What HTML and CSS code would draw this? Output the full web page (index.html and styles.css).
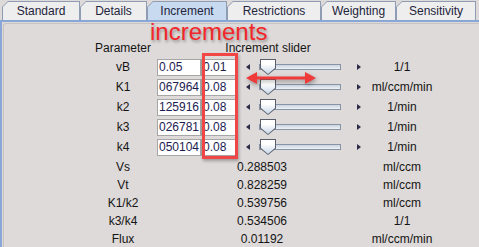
FILE: index.html
```html
<!DOCTYPE html>
<html lang="en">
<head>
    <meta charset="UTF-8">
    <title>Increment</title>
    <link rel="stylesheet" href="styles.css">
</head>
<body>
    <div class="tabs">
        <div class="tab w-standard"><span>Standard</span></div>
        <div class="tab w-details"><span>Details</span></div>
        <div class="tab active w-increment"><span>Increment</span></div>
        <div class="tab w-restrictions"><span>Restrictions</span></div>
        <div class="tab w-weighting"><span>Weighting</span></div>
        <div class="tab w-sensitivity"><span>Sensitivity</span></div>
    </div>

    <div class="content">
        <div class="panel">
            <div class="params">
                <div class="head">Parameter</div>
                <div class="head head-slider">Increment slider</div>
                <div class="head"></div>

                <div class="label">vB</div>
                <div class="field">0.05</div>
                <div class="field">0.01</div>
                <div class="slider">
                    <span class="arrow left"></span>
                    <span class="track"><span class="thumb"></span></span>
                    <span class="arrow right"></span>
                </div>
                <div class="unit">1/1</div>

                <div class="label">K1</div>
                <div class="field">067964</div>
                <div class="field">0.08</div>
                <div class="slider">
                    <span class="arrow left"></span>
                    <span class="track"><span class="thumb"></span></span>
                    <span class="arrow right"></span>
                </div>
                <div class="unit">ml/ccm/min</div>

                <div class="label">k2</div>
                <div class="field">125916</div>
                <div class="field">0.08</div>
                <div class="slider">
                    <span class="arrow left"></span>
                    <span class="track"><span class="thumb"></span></span>
                    <span class="arrow right"></span>
                </div>
                <div class="unit">1/min</div>

                <div class="label">k3</div>
                <div class="field">026781</div>
                <div class="field">0.08</div>
                <div class="slider">
                    <span class="arrow left"></span>
                    <span class="track"><span class="thumb"></span></span>
                    <span class="arrow right"></span>
                </div>
                <div class="unit">1/min</div>

                <div class="label">k4</div>
                <div class="field">050104</div>
                <div class="field">0.08</div>
                <div class="slider">
                    <span class="arrow left"></span>
                    <span class="track"><span class="thumb"></span></span>
                    <span class="arrow right"></span>
                </div>
                <div class="unit">1/min</div>
            </div>

            <div class="derived">
                <div>Vs</div><div>0.288503</div><div>ml/ccm</div>
                <div>Vt</div><div>0.828259</div><div>ml/ccm</div>
                <div>K1/k2</div><div>0.539756</div><div>ml/ccm</div>
                <div>k3/k4</div><div>0.534506</div><div>1/1</div>
                <div>Flux</div><div>0.01192</div><div>ml/ccm/min</div>
            </div>
        </div>
    </div>

    <!-- annotations drawn over the screenshot -->
    <div class="note-text">increments</div>
    <div class="note-box"></div>
    <svg class="note-arrow" width="72" height="16" viewBox="0 0 72 16">
        <path d="M10 6.5 H62 V9.5 H10 Z" fill="#f03a3a"/>
        <path d="M1 8 L12 2 L12 14 Z" fill="#f03a3a"/>
        <path d="M71 8 L60 2 L60 14 Z" fill="#f03a3a"/>
    </svg>
</body>
</html>
```

FILE: styles.css
```css
* {
    margin: 0;
    padding: 0;
    box-sizing: border-box;
}

body {
    font-family: 'Liberation Sans', Arial, sans-serif;
    font-size: 12px;
    color: #141414;
    background: #dedad9;
    width: 479px;
    height: 247px;
    overflow: hidden;
    position: relative;
}

/* tab strip */
.tabs {
    display: flex;
    height: 20px;
    padding: 1px 0 0 2px;
    background: #dedad9;
}

.tab {
    height: 19px;
    background: #8e9db3;
    clip-path: polygon(6px 0, 100% 0, 100% 100%, 0 100%, 0 6px);
    padding: 1px 1px 0 1px;
}

.tab span {
    display: flex;
    align-items: center;
    justify-content: center;
    height: 100%;
    background: #eeeeee;
    color: #24243c;
    clip-path: polygon(5px 0, 100% 0, 100% 100%, 0 100%, 0 5px);
}

.tab.active span {
    background: #c7daf0;
}

.w-standard { width: 78px; }
.w-details { width: 67px; }
.w-increment { width: 80px; }
.w-restrictions { width: 94px; }
.w-weighting { width: 75px; }
.w-sensitivity { width: 80px; }

/* content area */
.content {
    border-top: 2px solid #88a6d6;
    border-left: 2px solid #88a6d6;
    height: 227px;
    padding: 1px 0 0 1px;
    background: #dedad9;
}

.panel {
    height: 100%;
    border-top: 1px solid #c6c3c2;
    border-left: 1px solid #c6c3c2;
    border-top-left-radius: 3px;
    padding: 17px 0 0 85px;
}

.params {
    display: grid;
    grid-template-columns: 68px 44px 36px 130px 70px;
    grid-auto-rows: 20px;
    grid-template-rows: 16px;
    align-items: center;
}

.head {
    text-align: center;
    align-self: start;
    height: 16px;
}

.params .head:first-child {
    grid-column: 1;
}

.head-slider {
    grid-column: 2 / 5;
    padding-left: 12px;
}

.params .head:nth-child(3) {
    grid-column: 5;
}

.label {
    text-align: center;
}

.field {
    height: 17px;
    background: #ffffff;
    border: 1px solid #a6a6a6;
    color: #1c1c50;
    padding-left: 1px;
    line-height: 15px;
    overflow: hidden;
    white-space: nowrap;
}

.slider {
    display: flex;
    align-items: center;
    height: 20px;
    padding-left: 9px;
}

.arrow {
    width: 0;
    height: 0;
    border-top: 3.5px solid transparent;
    border-bottom: 3.5px solid transparent;
}

.arrow.left {
    border-right: 4px solid #2c2c48;
}

.arrow.right {
    border-left: 4px solid #2c2c48;
    margin-left: 16px;
}

.track {
    position: relative;
    margin-left: 9px;
    width: 82px;
    height: 6px;
    border: 1px solid #8694a6;
    background: linear-gradient(#c9d3df, #eef2f6);
}

.thumb {
    position: absolute;
    left: 0;
    top: -6px;
    width: 16px;
    height: 16px;
    background: #595f6a;
    clip-path: polygon(0 0, 100% 0, 100% 60%, 50% 100%, 0 60%);
}

.thumb::after {
    content: '';
    position: absolute;
    left: 1px;
    top: 1px;
    width: 14px;
    height: 14px;
    background: linear-gradient(#ffffff 30%, #c6d6ea);
    clip-path: polygon(0 0, 100% 0, 100% 58%, 50% 100%, 0 58%);
}

.unit {
    text-align: center;
}

.derived {
    display: grid;
    grid-template-columns: 68px 210px 70px;
    grid-auto-rows: 18px;
    align-items: center;
    text-align: center;
    margin-top: 1px;
}

/* red annotations */
.note-text {
    position: absolute;
    left: 150px;
    top: 22px;
    font-size: 24px;
    line-height: 20px;
    color: #f2262a;
    text-shadow: 1px 2px 3px rgba(0, 0, 0, 0.35);
}

.note-box {
    position: absolute;
    left: 202px;
    top: 53px;
    width: 36px;
    height: 106px;
    border: 3px solid #f04646;
    box-shadow: 1px 2px 3px rgba(0, 0, 0, 0.3);
}

.note-arrow {
    position: absolute;
    left: 245px;
    top: 70px;
    filter: drop-shadow(1px 2px 2px rgba(0, 0, 0, 0.35));
}
```
